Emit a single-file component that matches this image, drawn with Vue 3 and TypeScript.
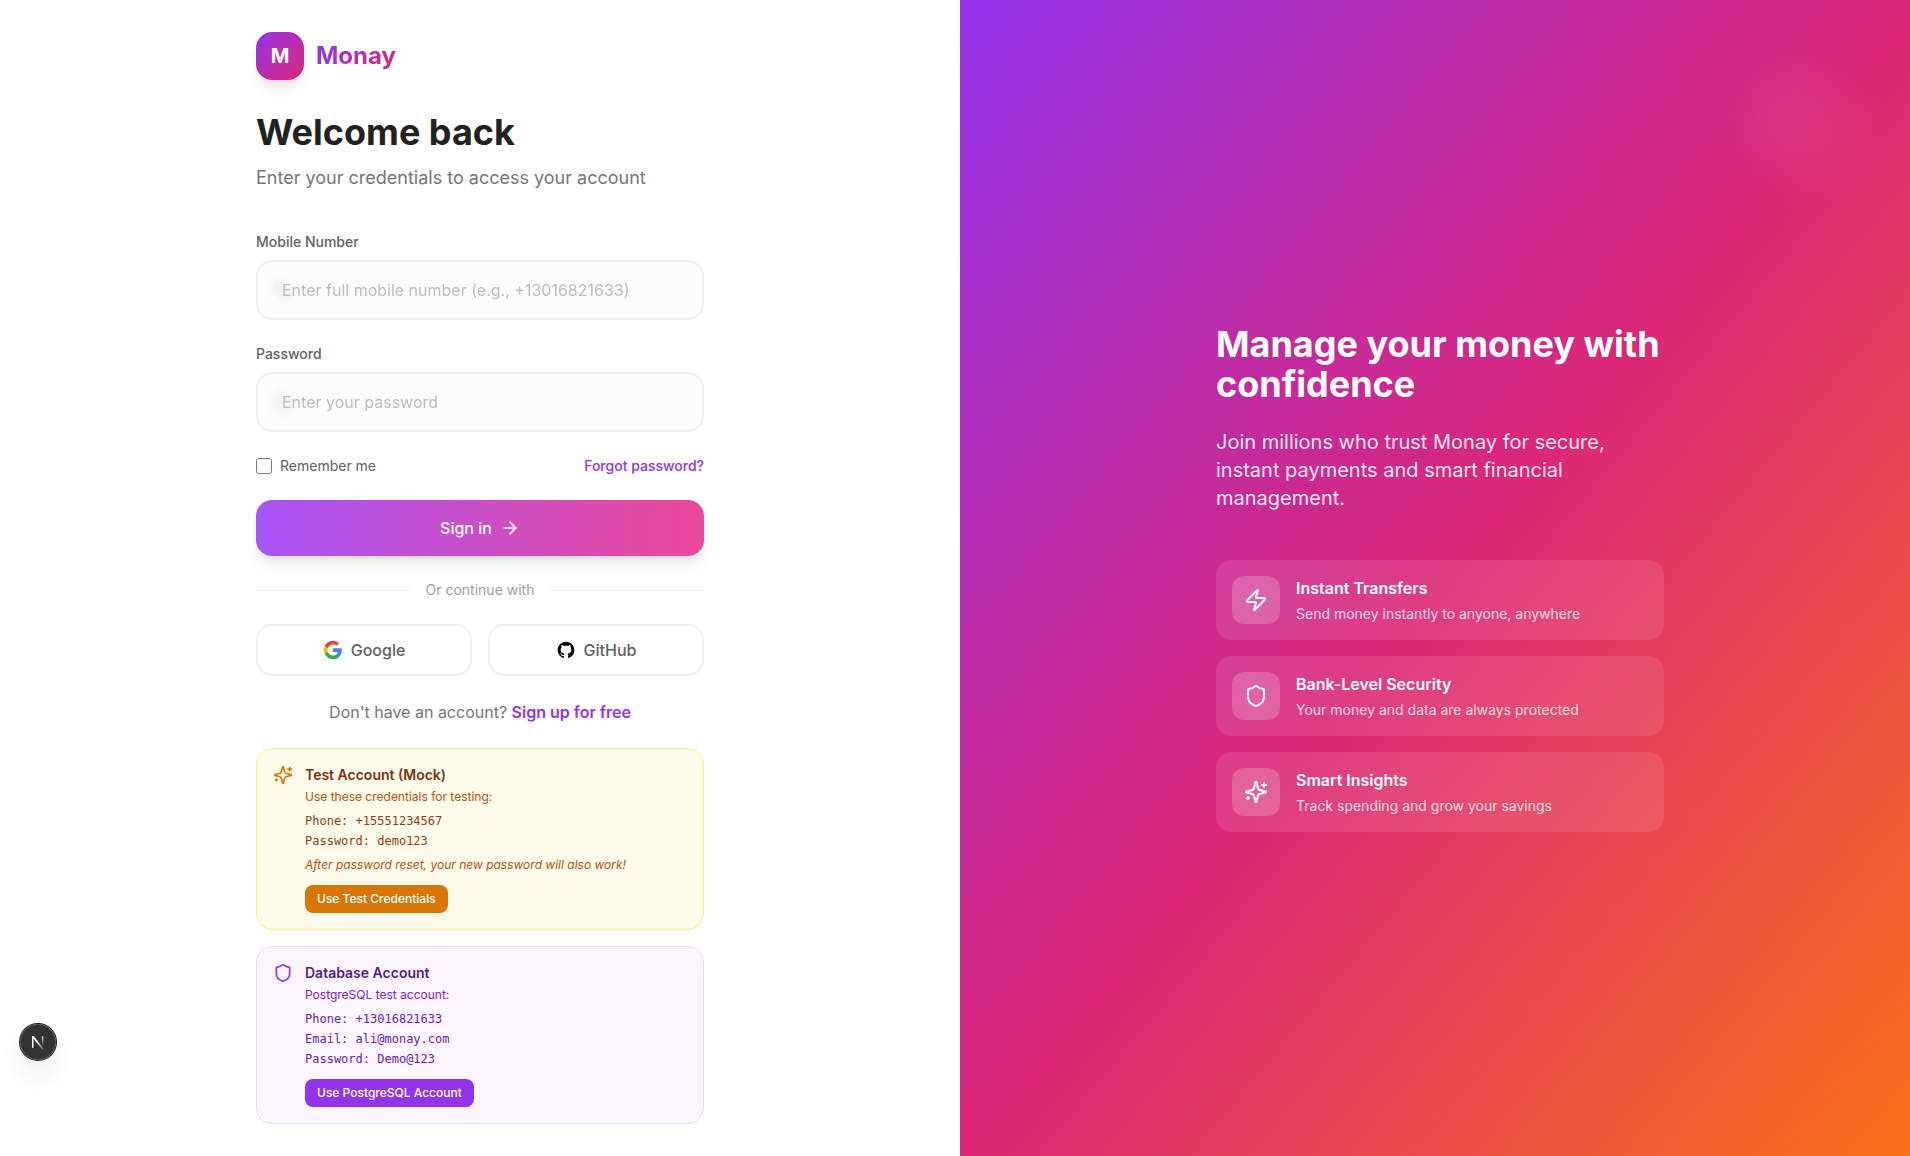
<script setup lang="ts">
import { ref } from 'vue'

interface Account {
  tone: string
  icon: string
  title: string
  intro: string
  lines: string[]
  note?: string
  action: string
}
interface Feature {
  icon: string
  title: string
  text: string
}

const icons: Record<string, string[]> = {
  zap: ['M4 14a1 1 0 0 1-.78-1.63l9.9-10.2a.5.5 0 0 1 .86.46l-1.92 6.02A1 1 0 0 0 13 10h7a1 1 0 0 1 .78 1.63l-9.9 10.2a.5.5 0 0 1-.86-.46l1.92-6.02A1 1 0 0 0 11 14z'],
  shield: ['M20 13c0 5-3.5 7.5-7.66 8.95a1 1 0 0 1-.67-.01C7.5 20.5 4 18 4 13V6a1 1 0 0 1 1-1c2 0 4.5-1.2 6.24-2.72a1.17 1.17 0 0 1 1.52 0C14.51 3.81 17 5 19 5a1 1 0 0 1 1 1z'],
  sparkles: [
    'M9.937 15.5A2 2 0 0 0 8.5 14.063l-6.135-1.582a.5.5 0 0 1 0-.962L8.5 9.936A2 2 0 0 0 9.937 8.5l1.582-6.135a.5.5 0 0 1 .963 0L14.063 8.5A2 2 0 0 0 15.5 9.937l6.135 1.581a.5.5 0 0 1 0 .964L15.5 14.063a2 2 0 0 0-1.437 1.437l-1.582 6.135a.5.5 0 0 1-.963 0z',
    'M20 3v4', 'M22 5h-4', 'M4 17v2', 'M5 18H3',
  ],
  phone: ['M22 16.92v3a2 2 0 0 1-2.18 2 19.79 19.79 0 0 1-8.63-3.07 19.5 19.5 0 0 1-6-6 19.79 19.79 0 0 1-3.07-8.67A2 2 0 0 1 4.11 2h3a2 2 0 0 1 2 1.72 12.84 12.84 0 0 0 .7 2.81 2 2 0 0 1-.45 2.11L8.09 9.91a16 16 0 0 0 6 6l1.27-1.27a2 2 0 0 1 2.11-.45 12.84 12.84 0 0 0 2.81.7A2 2 0 0 1 22 16.92z'],
  lock: ['M5 11h14a2 2 0 0 1 2 2v7a2 2 0 0 1-2 2H5a2 2 0 0 1-2-2v-7a2 2 0 0 1 2-2z', 'M7 11V7a5 5 0 0 1 10 0v4'],
  arrow: ['M5 12h14', 'm12 5 7 7-7 7'],
}

const fields = [
  { id: 'mobile', icon: 'phone', label: 'Mobile Number', type: 'tel', hint: 'Enter full mobile number (e.g., +13016821633)' },
  { id: 'password', icon: 'lock', label: 'Password', type: 'password', hint: 'Enter your password' },
]

const accounts: Account[] = [
  {
    tone: 'amber', icon: 'sparkles', title: 'Test Account (Mock)', intro: 'Use these credentials for testing:',
    lines: ['Phone: +15551234567', 'Password: demo123'],
    note: 'After password reset, your new password will also work!', action: 'Use Test Credentials',
  },
  {
    tone: 'purple', icon: 'shield', title: 'Database Account', intro: 'PostgreSQL test account:',
    lines: ['Phone: +13016821633', 'Email: ali@monay.com', 'Password: Demo@123'],
    action: 'Use PostgreSQL Account',
  },
]

const features: Feature[] = [
  { icon: 'zap', title: 'Instant Transfers', text: 'Send money instantly to anyone, anywhere' },
  { icon: 'shield', title: 'Bank-Level Security', text: 'Your money and data are always protected' },
  { icon: 'sparkles', title: 'Smart Insights', text: 'Track spending and grow your savings' },
]

const values = ref<Record<string, string>>({ mobile: '', password: '' })
const remember = ref(false)
</script>

<template>
  <div class="page">
    <main class="left">
      <div class="column">
        <div class="brand">
          <div class="mark">M</div>
          <span class="name">Monay</span>
        </div>
        <h1>Welcome back</h1>
        <p class="lead">Enter your credentials to access your account</p>

        <form @submit.prevent>
          <div v-for="f in fields" :key="f.id" class="field">
            <label :for="f.id">{{ f.label }}</label>
            <div class="control">
              <svg class="line-icon field-icon" viewBox="0 0 24 24"><path v-for="d in icons[f.icon]" :key="d" :d="d" /></svg>
              <input :id="f.id" v-model="values[f.id]" :type="f.type" :placeholder="f.hint" />
            </div>
          </div>
          <div class="options">
            <label class="remember"><input v-model="remember" type="checkbox" /><span>Remember me</span></label>
            <a class="forgot">Forgot password?</a>
          </div>
          <button class="submit" type="submit">
            <span>Sign in</span>
            <svg class="line-icon" viewBox="0 0 24 24"><path v-for="d in icons.arrow" :key="d" :d="d" /></svg>
          </button>
        </form>

        <div class="divider"><span>Or continue with</span></div>

        <div class="social">
          <button type="button">
            <svg class="google" viewBox="0 0 24 24">
              <path fill="#4285F4" d="M22.56 12.25c0-.78-.07-1.53-.2-2.25H12v4.26h5.92c-.26 1.37-1.04 2.53-2.21 3.31v2.77h3.57c2.08-1.92 3.28-4.74 3.28-8.09z" />
              <path fill="#34A853" d="M12 23c2.97 0 5.46-.98 7.28-2.66l-3.57-2.77c-.98.66-2.23 1.06-3.71 1.06-2.86 0-5.29-1.93-6.16-4.53H2.18v2.84C3.99 20.53 7.7 23 12 23z" />
              <path fill="#FBBC05" d="M5.84 14.09c-.22-.66-.35-1.36-.35-2.09s.13-1.43.35-2.09V7.07H2.18C1.43 8.55 1 10.22 1 12s.43 3.45 1.18 4.93l2.85-2.22.81-.62z" />
              <path fill="#EA4335" d="M12 5.38c1.62 0 3.06.56 4.21 1.64l3.15-3.15C17.45 2.09 14.97 1 12 1 7.7 1 3.99 3.47 2.18 7.07l3.66 2.84c.87-2.6 3.3-4.53 6.16-4.53z" />
            </svg>
            Google
          </button>
          <button type="button">
            <svg class="github" viewBox="0 0 24 24">
              <path d="M12 2C6.477 2 2 6.484 2 12.017c0 4.425 2.865 8.18 6.839 9.504.5.092.682-.217.682-.483 0-.237-.008-.868-.013-1.703-2.782.605-3.369-1.343-3.369-1.343-.454-1.158-1.11-1.466-1.11-1.466-.908-.62.069-.608.069-.608 1.003.07 1.531 1.032 1.531 1.032.892 1.53 2.341 1.088 2.91.832.092-.647.35-1.088.636-1.338-2.22-.253-4.555-1.113-4.555-4.951 0-1.093.39-1.988 1.029-2.688-.103-.253-.446-1.272.098-2.65 0 0 .84-.27 2.75 1.026A9.564 9.564 0 0112 6.844c.85.004 1.705.115 2.504.337 1.909-1.296 2.747-1.027 2.747-1.027.546 1.379.202 2.398.1 2.651.64.7 1.028 1.595 1.028 2.688 0 3.848-2.339 4.695-4.566 4.943.359.309.678.92.678 1.855 0 1.338-.012 2.419-.012 2.747 0 .268.18.58.688.482A10.019 10.019 0 0022 12.017C22 6.484 17.522 2 12 2z" />
            </svg>
            GitHub
          </button>
        </div>

        <p class="signup">Don't have an account? <a>Sign up for free</a></p>

        <section v-for="a in accounts" :key="a.title" class="account" :class="a.tone">
          <svg class="line-icon" viewBox="0 0 24 24"><path v-for="d in icons[a.icon]" :key="d" :d="d" /></svg>
          <div>
            <h2>{{ a.title }}</h2>
            <p class="intro">{{ a.intro }}</p>
            <div class="creds"><p v-for="l in a.lines" :key="l">{{ l }}</p></div>
            <p v-if="a.note" class="note">{{ a.note }}</p>
            <button type="button">{{ a.action }}</button>
          </div>
        </section>
      </div>
    </main>

    <aside class="right">
      <div class="glow"></div>
      <div class="column">
        <h2>Manage your money with confidence</h2>
        <p class="pitch">Join millions who trust Monay for secure, instant payments and smart financial management.</p>
        <ul>
          <li v-for="f in features" :key="f.title">
            <div class="tile"><svg class="line-icon" viewBox="0 0 24 24"><path v-for="d in icons[f.icon]" :key="d" :d="d" /></svg></div>
            <div>
              <h3>{{ f.title }}</h3>
              <p>{{ f.text }}</p>
            </div>
          </li>
        </ul>
      </div>
    </aside>

    <div class="dev-badge">
      <svg viewBox="0 0 36 36" fill="none">
        <defs>
          <linearGradient id="stem" x1="0" y1="12" x2="0" y2="22" gradientUnits="userSpaceOnUse">
            <stop stop-color="#fff" /><stop offset="1" stop-color="#fff" stop-opacity="0" />
          </linearGradient>
          <linearGradient id="slash" x1="17" y1="17" x2="24" y2="26" gradientUnits="userSpaceOnUse">
            <stop stop-color="#fff" /><stop offset="1" stop-color="#fff" stop-opacity="0.15" />
          </linearGradient>
        </defs>
        <path d="M12 12.3H13.5V23.8H12Z" fill="#fff" />
        <path d="M12 12.3H13.9L23.7 24.8L22.5 25.8L12 12.9Z" fill="url(#slash)" />
        <path d="M21.9 12.3H23.3V22H21.9Z" fill="url(#stem)" />
      </svg>
    </div>
  </div>
</template>

<style>
body { margin: 0; background: #fff; }
</style>

<style scoped>
* { box-sizing: border-box; margin: 0; padding: 0; }
.page {
  display: flex; width: 100%; height: 1156px; overflow: hidden; position: relative;
  font-family: Inter, sans-serif; font-size: 16px; line-height: 24px; background: #fff;
}
button, input { font: inherit; }
.line-icon { display: block; flex: none; width: 20px; height: 20px; fill: none; stroke: currentColor; stroke-width: 2; stroke-linecap: round; stroke-linejoin: round; }
.left, .right { flex: none; width: 960px; height: 1156px; display: flex; justify-content: center; }
.column { width: 448px; }
.left .column { padding-top: 32px; }

.brand { display: flex; align-items: center; gap: 12px; margin-bottom: 32px; }
.mark {
  width: 48px; height: 48px; border-radius: 16px; display: flex; align-items: center; justify-content: center;
  color: #fff; font-weight: 700; font-size: 20px; background: linear-gradient(to bottom right, #9333ea, #db2777);
  box-shadow: 0 10px 15px -3px rgba(0,0,0,.1), 0 4px 6px -4px rgba(0,0,0,.1);
}
.name { font-size: 24px; line-height: 32px; font-weight: 700; color: transparent; background: linear-gradient(to right, #9333ea, #db2777); background-clip: text; -webkit-background-clip: text; }
h1 { font-size: 36px; line-height: 40px; font-weight: 700; color: #212121; margin-bottom: 12px; }
.lead { font-size: 18px; line-height: 28px; color: #757575; margin-bottom: 40px; }

.field { margin-bottom: 24px; }
.field label { display: block; font-size: 14px; line-height: 20px; font-weight: 500; color: #616161; margin-bottom: 8px; }
.control { position: relative; }
.field-icon { position: absolute; left: 16px; top: 20px; color: #bdbdbd; }
.control input {
  display: block; position: relative; width: 100%; height: 60px; padding: 0 24px; border: 2px solid #eee; border-radius: 16px;
  background: rgba(250,250,250,.5); backdrop-filter: blur(4px); outline: none; color: #212121;
}
.control input::placeholder { color: #bdbdbd; opacity: 1; }
.options { display: flex; justify-content: space-between; align-items: center; font-size: 14px; line-height: 20px; margin-bottom: 24px; }
.remember { display: flex; align-items: center; gap: 8px; color: #616161; }
.remember input { width: 16px; height: 16px; }
.forgot { color: #9333ea; font-weight: 500; }
.submit {
  display: flex; align-items: center; justify-content: center; gap: 8px; width: 100%; height: 56px; border: 0; border-radius: 16px;
  color: #fff; font-weight: 500; background: linear-gradient(to right, #a855f7, #ec4899);
  box-shadow: 0 10px 15px -3px rgba(0,0,0,.1), 0 4px 6px -4px rgba(0,0,0,.1);
}
.divider { display: flex; align-items: center; gap: 16px; margin: 24px 0; font-size: 14px; line-height: 20px; color: #9e9e9e; }
.divider::before, .divider::after { content: ''; flex: 1; height: 1px; background: #eee; }
.social { display: flex; gap: 16px; }
.social button {
  flex: 1; height: 52px; display: flex; align-items: center; justify-content: center; gap: 8px;
  border: 2px solid #eee; border-radius: 16px; background: transparent; color: #616161; font-weight: 500;
}
.social svg { width: 20px; height: 20px; display: block; fill: #000; }
.signup { margin: 24px 0; text-align: center; color: #757575; }
.signup a { color: #9333ea; font-weight: 600; }

.account { display: flex; align-items: flex-start; gap: 12px; padding: 16px; border: 1px solid; border-radius: 16px; margin-bottom: 16px; font-size: 12px; line-height: 16px; }
.account h2 { font-size: 14px; line-height: 20px; font-weight: 600; }
.intro { margin-top: 4px; }
.creds { margin-top: 8px; display: flex; flex-direction: column; gap: 4px; font-family: "DejaVu Sans Mono", monospace; }
.note { margin-top: 8px; font-style: italic; }
.account button { display: block; margin-top: 12px; padding: 6px 12px; border: 0; border-radius: 8px; color: #fff; font-weight: 500; }
.amber { background: #fffbeb; border-color: #fde68a; color: #b45309; }
.amber .line-icon { color: #d97706; }
.amber h2 { color: #78350f; }
.amber .creds { color: #92400e; }
.amber button { background: #d97706; }
.purple { background: #faf5ff; border-color: #e9d5ff; color: #7e22ce; }
.purple .line-icon { color: #9333ea; }
.purple h2 { color: #581c87; }
.purple .creds { color: #6b21a8; }
.purple button { background: #9333ea; }

.right { position: relative; align-items: center; overflow: hidden; color: #fff; background: linear-gradient(to bottom right, #9333ea, #db2777, #f97316); }
.glow { position: absolute; top: 72px; right: 76px; width: 96px; height: 96px; border-radius: 50%; background: rgba(255,255,255,.08); filter: blur(32px); }
.right .column { position: relative; }
.right h2 { font-size: 36px; line-height: 40px; font-weight: 700; margin-bottom: 24px; }
.pitch { font-size: 20px; line-height: 28px; color: rgba(255,255,255,.9); margin-bottom: 48px; }
ul { list-style: none; display: flex; flex-direction: column; gap: 16px; }
li { display: flex; align-items: center; gap: 16px; height: 80px; padding: 16px; border-radius: 16px; background: rgba(255,255,255,.1); }
.tile { width: 48px; height: 48px; border-radius: 12px; background: rgba(255,255,255,.2); display: flex; align-items: center; justify-content: center; }
.tile .line-icon { width: 24px; height: 24px; }
h3 { font-size: 16px; line-height: 24px; font-weight: 600; margin-bottom: 4px; }
li p { font-size: 14px; line-height: 20px; color: rgba(255,255,255,.8); }

.dev-badge {
  position: absolute; left: 20px; top: 1024px; width: 36px; height: 36px; border-radius: 50%; background: rgba(0,0,0,.8);
  box-shadow: 0 0 0 1px #171717, inset 0 0 0 1px rgba(255,255,255,.14), 0 16px 32px -8px rgba(0,0,0,.24);
}
.dev-badge svg { display: block; width: 36px; height: 36px; }
</style>
